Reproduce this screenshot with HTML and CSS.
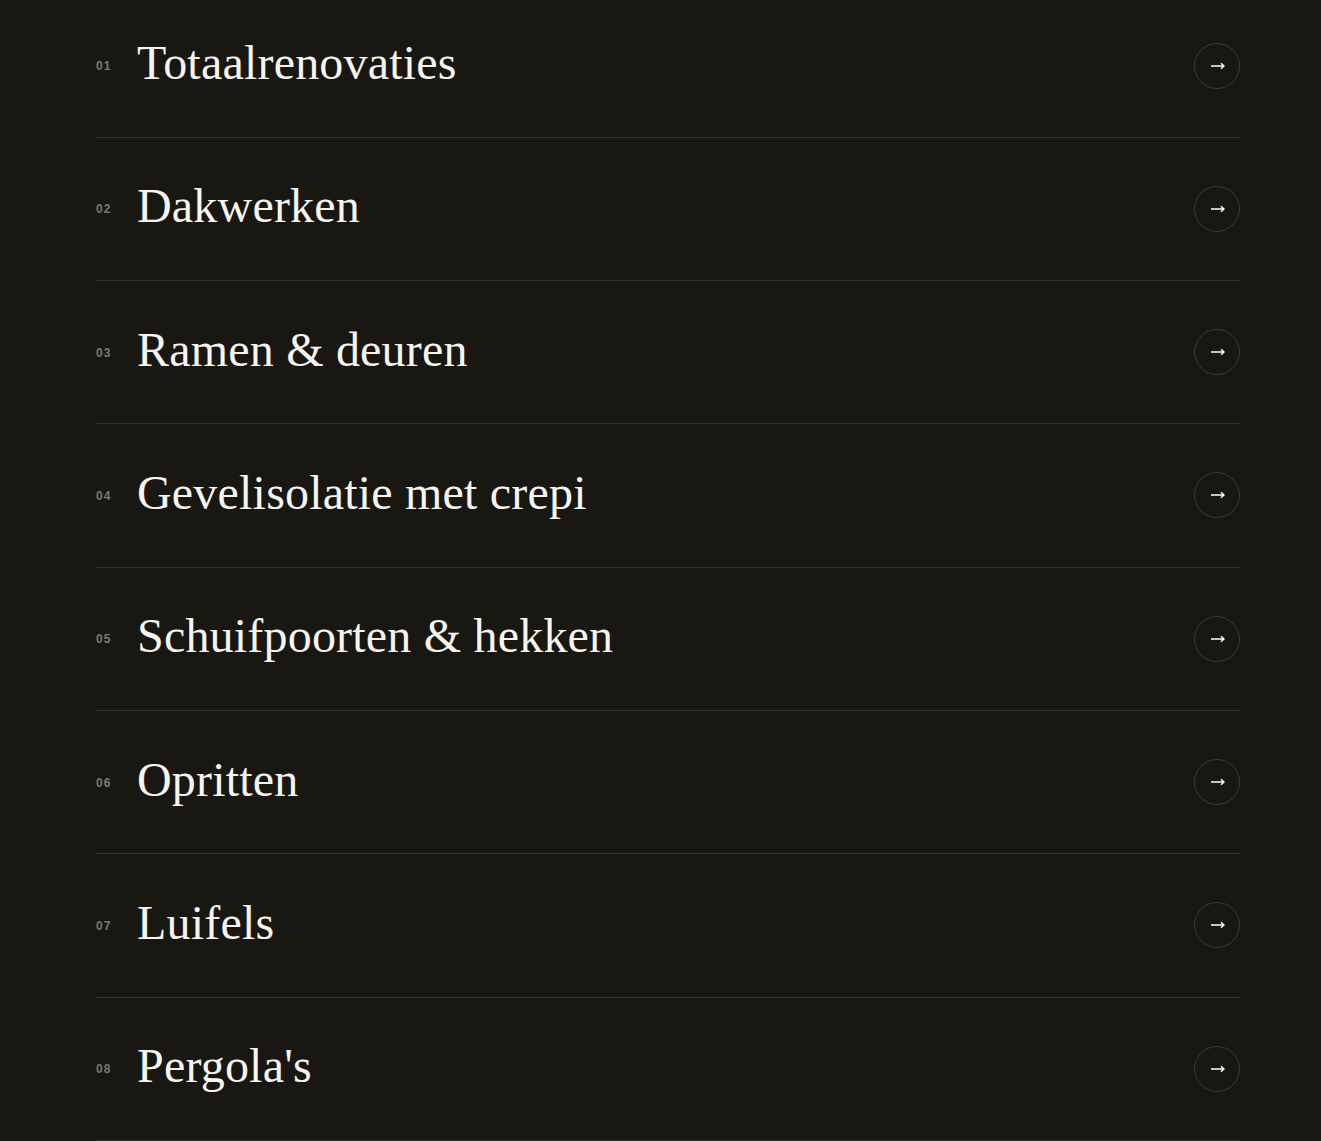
FILE: index.html
```html
<!DOCTYPE html>
<html lang="nl">
<head>
<meta charset="utf-8">
<title>Diensten</title>
<link rel="stylesheet" href="styles.css">
</head>
<body>
<main class="page">
  <ul class="services">
    <li class="service"><span class="num">01</span><span class="title">Totaalrenovaties</span><span class="go"><svg class="arrow" viewBox="0 0 14 8" width="14" height="8"><path d="M0 4H13M10 1.2L13 4 10 6.8"/></svg></span></li>
    <li class="service"><span class="num">02</span><span class="title">Dakwerken</span><span class="go"><svg class="arrow" viewBox="0 0 14 8" width="14" height="8"><path d="M0 4H13M10 1.2L13 4 10 6.8"/></svg></span></li>
    <li class="service"><span class="num">03</span><span class="title">Ramen &amp; deuren</span><span class="go"><svg class="arrow" viewBox="0 0 14 8" width="14" height="8"><path d="M0 4H13M10 1.2L13 4 10 6.8"/></svg></span></li>
    <li class="service"><span class="num">04</span><span class="title">Gevelisolatie met crepi</span><span class="go"><svg class="arrow" viewBox="0 0 14 8" width="14" height="8"><path d="M0 4H13M10 1.2L13 4 10 6.8"/></svg></span></li>
    <li class="service"><span class="num">05</span><span class="title">Schuifpoorten &amp; hekken</span><span class="go"><svg class="arrow" viewBox="0 0 14 8" width="14" height="8"><path d="M0 4H13M10 1.2L13 4 10 6.8"/></svg></span></li>
    <li class="service"><span class="num">06</span><span class="title">Opritten</span><span class="go"><svg class="arrow" viewBox="0 0 14 8" width="14" height="8"><path d="M0 4H13M10 1.2L13 4 10 6.8"/></svg></span></li>
    <li class="service"><span class="num">07</span><span class="title">Luifels</span><span class="go"><svg class="arrow" viewBox="0 0 14 8" width="14" height="8"><path d="M0 4H13M10 1.2L13 4 10 6.8"/></svg></span></li>
    <li class="service"><span class="num">08</span><span class="title">Pergola's</span><span class="go"><svg class="arrow" viewBox="0 0 14 8" width="14" height="8"><path d="M0 4H13M10 1.2L13 4 10 6.8"/></svg></span></li>
  </ul>
</main>
</body>
</html>
```
FILE: styles.css
```css
html, body {
  margin: 0;
  padding: 0;
  background: #181712;
}
body {
  min-height: 1141px;
  overflow: hidden;
}
.page {
  padding: 0 81px 0 96px;
}
.services {
  list-style: none;
  margin: -5.67px 0 0 0;
  padding: 0;
}
.service {
  display: flex;
  align-items: center;
  height: 142.33px;
  border-bottom: 1px solid #36342f;
}
.num {
  width: 41px;
  flex: none;
  font-family: "Liberation Sans", Arial, sans-serif;
  font-weight: 700;
  font-size: 12px;
  letter-spacing: 0.1em;
  color: #7b7973;
  padding-top: 1px;
}
.title {
  flex: 1;
  font-family: "Liberation Serif", "Times New Roman", serif;
  font-size: 48px;
  letter-spacing: 0.2px;
  line-height: 1.1;
  color: #f6f4ef;
  padding-bottom: 4px;
}
.go {
  flex: none;
  width: 44px;
  height: 44px;
  border: 1px solid #3d3b36;
  border-radius: 50%;
  display: flex;
  align-items: center;
  justify-content: center;
}
.arrow {
  display: block;
  fill: none;
  stroke: #ffffff;
  stroke-width: 1.4;
  margin-left: 1px;
}
```
